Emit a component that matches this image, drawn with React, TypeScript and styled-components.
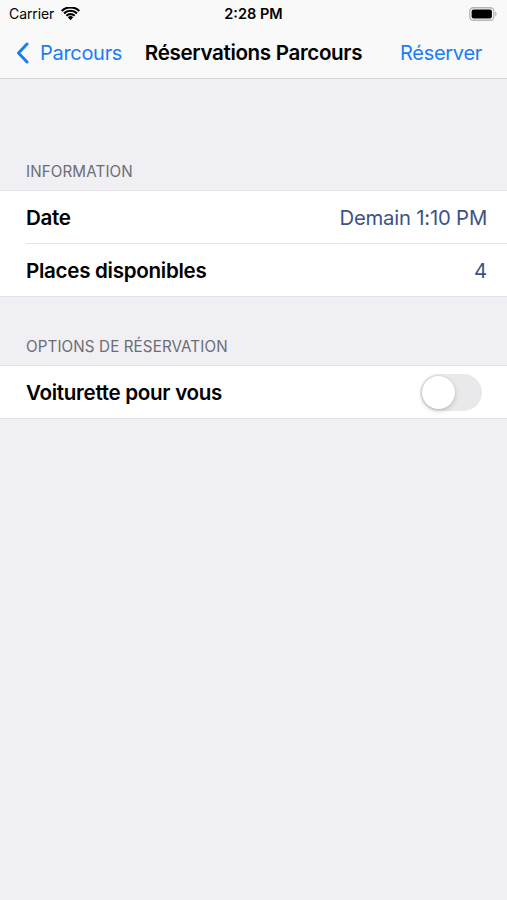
import React from "react";
import styled, { createGlobalStyle } from "styled-components";

const Global = createGlobalStyle`
  html, body { margin: 0; padding: 0; background: #efeff4; }
  body { font-family: Inter, "Noto Sans", "Liberation Sans", sans-serif; -webkit-font-smoothing: antialiased; }
`;

const Page = styled.div`
  width: 507px;
  height: 900px;
  background: #efeff4;
  display: flex;
  flex-direction: column;
`;

const StatusBar = styled.div`
  height: 27px;
  background: #f9f9f9;
  display: grid;
  grid-template-columns: 1fr auto 1fr;
  align-items: center;
  padding: 0 9px;
  font-size: 14px;
  color: #000;
`;

const StatusLeft = styled.div`
  display: flex;
  align-items: center;
  gap: 7px;
  letter-spacing: -0.1px;
`;

const StatusTime = styled.div`
  font-weight: 600;
  font-size: 14.5px;
`;

const StatusRight = styled.div`
  display: flex;
  justify-content: flex-end;
  padding-right: 1px;
`;

const NavBar = styled.div`
  height: 51px;
  background: #f9f9f9;
  border-bottom: 1px solid #d6d6d9;
  display: grid;
  grid-template-columns: 1fr auto 1fr;
  align-items: center;
  padding: 0 16px;
`;

const BackButton = styled.div`
  display: flex;
  align-items: center;
  gap: 11px;
  color: #1a7cf5;
  font-size: 20px;
  letter-spacing: -0.3px;
`;

const NavTitle = styled.div`
  font-weight: 600;
  font-size: 20.6px;
  letter-spacing: -0.35px;
  color: #000;
`;

const NavAction = styled.div`
  justify-self: end;
  padding-right: 9px;
  color: #1a7cf5;
  font-size: 20px;
  letter-spacing: -0.3px;
`;

const SectionHeader = styled.div<{ $top: number }>`
  padding: ${(p) => p.$top}px 26px 9px;
  font-size: 15.2px;
  color: #6d6d72;
  letter-spacing: 0.1px;
  line-height: 18px;
`;

const Group = styled.div`
  background: #fff;
  border-top: 1px solid #e2e2e6;
  border-bottom: 1px solid #e2e2e6;
`;

const Row = styled.div<{ $sep?: boolean }>`
  height: 52px;
  margin-left: 26px;
  padding-right: 20px;
  display: flex;
  align-items: center;
  justify-content: space-between;
  border-bottom: ${(p) => (p.$sep ? "1px solid #e4e4e8" : "none")};
`;

const Label = styled.div`
  font-size: 20.6px;
  font-weight: 600;
  color: #000;
  letter-spacing: -0.3px;
`;

const Value = styled.div`
  font-size: 20.3px;
  color: #3b5383;
  letter-spacing: -0.2px;
`;

const Toggle = styled.div`
  width: 62px;
  height: 37px;
  border-radius: 19px;
  background: #e9e9eb;
  position: relative;
  margin-right: 5px;
`;

const Knob = styled.div`
  position: absolute;
  left: 2px;
  top: 2px;
  width: 33px;
  height: 33px;
  border-radius: 50%;
  background: #fff;
  box-shadow: 0 2px 5px rgba(0, 0, 0, 0.18), 0 0 0 0.5px rgba(0, 0, 0, 0.08);
`;

const Wifi = () => (
  <svg width="19" height="14" viewBox="0 0 19 14">
    <path d="M9.5 13.2 L6.8 10.3 A3.9 3.9 0 0 1 12.2 10.3 Z" fill="#000" />
    <path d="M4.6 8.0 A7 7 0 0 1 14.4 8.0 L12.9 9.6 A4.9 4.9 0 0 0 6.1 9.6 Z" fill="#000" />
    <path d="M2.3 5.6 A10.3 10.3 0 0 1 16.7 5.6 L15.2 7.2 A8.1 8.1 0 0 0 3.8 7.2 Z" fill="#000" />
    <path d="M0 3.2 A13.6 13.6 0 0 1 19 3.2 L17.5 4.8 A11.4 11.4 0 0 0 1.5 4.8 Z" fill="#000" />
  </svg>
);

const Battery = () => (
  <svg width="28" height="14" viewBox="0 0 28 14">
    <rect x="0.75" y="0.75" width="24" height="12.5" rx="3.5" fill="none" stroke="#b5b5b5" strokeWidth="1.3" />
    <rect x="2.6" y="2.6" width="20.3" height="8.8" rx="2" fill="#000" />
    <path d="M26.2 4.6 Q27.6 5.2 27.6 7 Q27.6 8.8 26.2 9.4 Z" fill="#b5b5b5" />
  </svg>
);

const Chevron = () => (
  <svg width="13" height="22" viewBox="0 0 13 22">
    <path d="M11 2 L2.5 11 L11 20" fill="none" stroke="#1a7cf5" strokeWidth="3" strokeLinecap="round" strokeLinejoin="round" />
  </svg>
);

export default function App() {
  return (
    <>
      <Global />
      <Page>
        <StatusBar>
          <StatusLeft>
            Carrier
            <Wifi />
          </StatusLeft>
          <StatusTime>2:28 PM</StatusTime>
          <StatusRight>
            <Battery />
          </StatusRight>
        </StatusBar>
        <NavBar>
          <BackButton>
            <Chevron />
            Parcours
          </BackButton>
          <NavTitle>Réservations Parcours</NavTitle>
          <NavAction>Réserver</NavAction>
        </NavBar>
        <SectionHeader $top={84}>INFORMATION</SectionHeader>
        <Group>
          <Row $sep>
            <Label>Date</Label>
            <Value>Demain 1:10 PM</Value>
          </Row>
          <Row>
            <Label>Places disponibles</Label>
            <Value>4</Value>
          </Row>
        </Group>
        <SectionHeader $top={41}>OPTIONS DE RÉSERVATION</SectionHeader>
        <Group>
          <Row>
            <Label>Voiturette pour vous</Label>
            <Toggle>
              <Knob />
            </Toggle>
          </Row>
        </Group>
      </Page>
    </>
  );
}
